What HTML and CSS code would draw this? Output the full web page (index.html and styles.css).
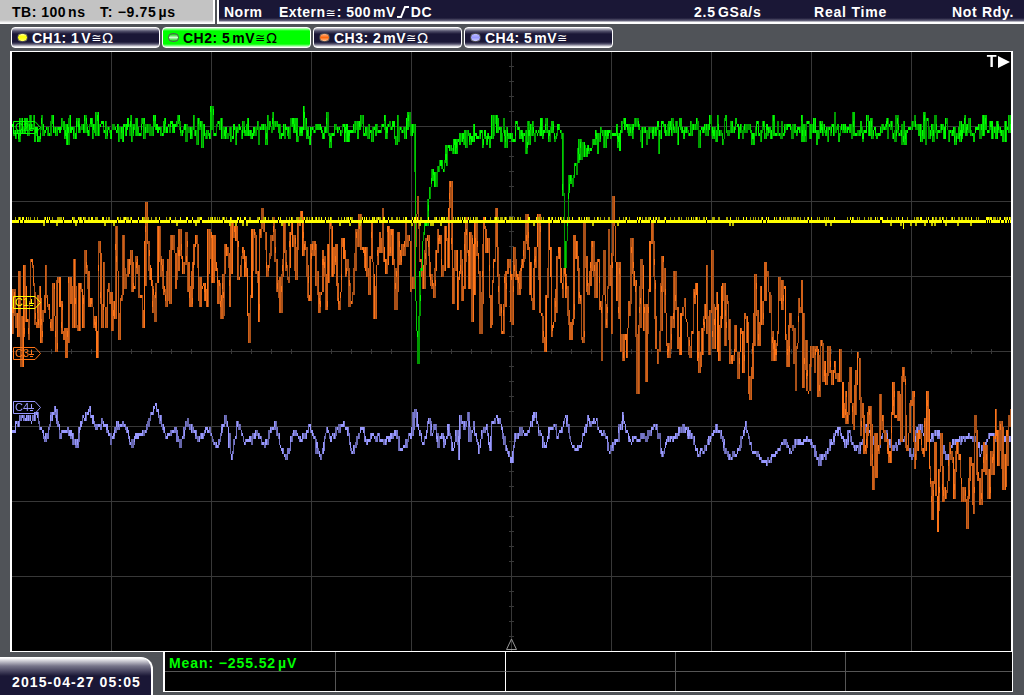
FILE: index.html
```html
<!DOCTYPE html>
<html lang="en">

<head>
    <meta charset="UTF-8">
    <meta name="viewport" content="width=device-width, initial-scale=1.0">
    <title>Oscilloscope</title>
    <link rel="stylesheet" href="styles.css">
</head>

<body>
    <div class="screen">
        <div class="top-bar">
            <div class="timebase"><span class="tb">TB: 100<i></i>ns</span><span class="pos">T: &minus;9.75<i></i>µs</span></div>
            <div class="status">
                <span class="mode">Norm</span>
                <span class="trigger">Extern<b class="sym">≅</b>: 500<i></i>mV<svg class="edge" width="13" height="12" viewBox="0 0 13 12"><path d="M0 11H4L8 1H12" fill="none" stroke="#fff" stroke-width="2"/></svg>DC</span>
                <span class="rate">2.5<i></i>GSa/s</span>
                <span class="acq">Real Time</span>
                <span class="ready">Not Rdy.</span>
            </div>
        </div>

        <div class="channels">
            <div class="channel ch1"><span class="led"></span><span class="ch-name">CH1:</span><span>1<i></i>V</span><span class="sym">≅</span><span class="sym ohm">Ω</span></div>
            <div class="channel ch2 active"><span class="led"></span><span class="ch-name">CH2:</span><span>5<i></i>mV</span><span class="sym">≅</span><span class="sym ohm">Ω</span></div>
            <div class="channel ch3"><span class="led"></span><span class="ch-name">CH3:</span><span>2<i></i>mV</span><span class="sym">≅</span><span class="sym ohm">Ω</span></div>
            <div class="channel ch4"><span class="led"></span><span class="ch-name">CH4:</span><span>5<i></i>mV</span><span class="sym">≅</span></div>
        </div>

        <div class="plot">
            <canvas id="scope" width="999" height="599"></canvas>
            <div class="marker m1"><svg width="28" height="13" viewBox="0 0 28 13"><path d="M.5.5H22L27.5 6.5L22 12.5H.5Z"/><path d="M18.5 3V7M16 7.5H21M17 9.5H20"/></svg><span>C1</span></div>
            <div class="marker m2"><svg width="28" height="13" viewBox="0 0 28 13"><path d="M.5.5H22L27.5 6.5L22 12.5H.5Z"/><path d="M18.5 3V7M16 7.5H21M17 9.5H20"/></svg><span>C2</span></div>
            <div class="marker m3"><svg width="28" height="13" viewBox="0 0 28 13"><path d="M.5.5H22L27.5 6.5L22 12.5H.5Z"/><path d="M18.5 3V7M16 7.5H21M17 9.5H20"/></svg><span>C3</span></div>
            <div class="marker m4"><svg width="28" height="13" viewBox="0 0 28 13"><path d="M.5.5H22L27.5 6.5L22 12.5H.5Z"/><path d="M18.5 3V7M16 7.5H21M17 9.5H20"/></svg><span>C4</span></div>
            <div class="trig-level"><span>T</span><svg width="12" height="12" viewBox="0 0 12 12"><path d="M0 0L12 6L0 12Z" fill="#fff"/></svg></div>
            <svg class="trig-pos" width="11" height="12" viewBox="0 0 11 12"><path d="M5.5 1L10.5 11.5H.5Z" fill="none" stroke="#999"/></svg>
        </div>

        <div class="bottom">
            <div class="clock">2015-04-27 05:05</div>
            <div class="measure">
                <div class="cell value">Mean: &minus;255.52<i></i>µV</div>
                <div class="cell split"></div>
                <div class="cell"></div>
                <div class="cell"></div>
                <div class="cell"></div>
                <div class="cell"></div>
                <div class="cell split"></div>
                <div class="cell"></div>
                <div class="cell"></div>
                <div class="cell"></div>
            </div>
        </div>
    </div>

    <script src="script.js"></script>
</body>

</html>
```
FILE: styles.css
```css
* {
    box-sizing: border-box;
}

body {
    margin: 0;
    background-color: #505358;
    font-family: "Liberation Sans", Arial, sans-serif;
    font-size: 14px;
    font-weight: bold;
    color: #fff;
    letter-spacing: 0.5px;
}

/* thin space between a number and its unit */
i {
    display: inline-block;
    width: 2px;
}

.screen {
    width: 1024px;
    height: 695px;
    overflow: hidden;
}

.sym {
    font-family: "DejaVu Sans", sans-serif;
    font-weight: normal;
    font-size: 12px;
    letter-spacing: 0;
    line-height: 12px;
}

.ohm {
    margin-left: 1px;
    font-size: 14px;
}

.top-bar {
    display: flex;
    gap: 2px;
    height: 24px;
    line-height: 25px;
    white-space: nowrap;
}

.timebase {
    display: flex;
    width: 215px;
    padding-left: 12px;
    color: #000;
    background: linear-gradient(#c3c3c3 20px, #fff 23px);
    border-right: 2px solid #fff;
}

.tb {
    width: 88px;
}

.pos {
    letter-spacing: 0.7px;
}

.status {
    display: flex;
    flex: 1;
    padding-left: 5px;
    background: linear-gradient(#1a1736 18px, #6a6880 21px, #fff 22px);
    border-left: 2px solid #fff;
}

.mode {
    width: 55px;
}

.trigger {
    width: 415px;
}

.trigger .sym {
    margin-right: 1px;
}

.rate {
    width: 120px;
    letter-spacing: 0.8px;
}

.acq {
    width: 138px;
    letter-spacing: 0.8px;
}

.ready {
    letter-spacing: 0.7px;
}

.edge {
    margin: 0 1px -1px 1px;
}

.channels {
    display: flex;
    gap: 2px;
    height: 27px;
    padding: 3px 0 3px 11px;
}

.channel {
    display: flex;
    align-items: center;
    width: 149px;
    height: 21px;
    padding: 1px 0 0 5px;
    border: 1px solid #fff;
    border-radius: 4px;
    background: linear-gradient(#d8d8e0, #55536d 3px, #1a1736 6px, #1a1736 14px, #55536d 16px, #fff 19px);
}

.channel.active {
    color: #000;
    background: linear-gradient(#d0ffd0, #0f0 3px, #0f0 16px, #e0ffe0 19px);
}

.led {
    width: 11px;
    height: 9px;
    margin: 0 4px 1px 0;
    border: 1px solid #555;
    border-radius: 5px;
}

.ch-name {
    width: 39px;
}

.ch1 .led {
    background: linear-gradient(#ff9, #ff0 40%, #ff6);
}

.ch2 .led {
    background: linear-gradient(#0c0, #cfc 50%, #0c0);
}

.ch3 .led {
    background: linear-gradient(#ffb080, #ff6a10 50%, #ffc090);
}

.ch4 .led {
    background: linear-gradient(#bbf, #99f 50%, #ccf);
}

.plot {
    position: relative;
    width: 1003px;
    height: 601px;
    margin-left: 10px;
    border: solid #fff;
    border-width: 1px 2px;
    background-color: #000;
}

.plot canvas {
    display: block;
}

.marker {
    position: absolute;
    left: 1px;
    height: 13px;
    font-weight: normal;
    font-size: 11px;
    line-height: 13px;
    letter-spacing: 0;
}

.marker svg {
    display: block;
    fill: none;
    stroke: currentColor;
}

.marker span {
    position: absolute;
    left: 2px;
    top: 0;
}

.m1 {
    top: 244px;
    color: #ff0;
}

.m2 {
    top: 69px;
    color: #0f0;
}

.m3 {
    top: 295px;
    color: #ff7518;
}

.m4 {
    top: 349px;
    color: #9999ff;
}

.trig-level {
    position: absolute;
    top: 3px;
    right: 1px;
    display: flex;
    align-items: center;
    gap: 1px;
    font-size: 16px;
    line-height: 13px;
}

.trig-pos {
    position: absolute;
    left: 494px;
    bottom: 1px;
}

.bottom {
    display: flex;
    gap: 10px;
    height: 43px;
}

.clock {
    width: 153px;
    height: 38px;
    margin-top: 5px;
    padding-left: 12px;
    line-height: 48px;
    letter-spacing: 1.1px;
    white-space: nowrap;
    border-top: 1px solid #fff;
    border-right: 2px solid #fff;
    border-radius: 0 12px 0 0;
    background: linear-gradient(#fff, #77758a 8px, #1a1736 18px);
}

.measure {
    display: grid;
    grid-template-columns: 171px 170px 170px 170px 1fr;
    grid-template-rows: 20px 19px;
    width: 850px;
    height: 40px;
    border: solid #fff;
    border-width: 0 1px 1px 2px;
    background-color: #000;
}

.cell {
    border-right: 1px solid #555;
    border-bottom: 1px solid #555;
    white-space: nowrap;
}

.cell.split {
    border-right-color: #fff;
}

.cell:nth-child(5n) {
    border-right: none;
}

.cell:nth-child(n+6) {
    border-bottom: none;
}

.value {
    padding-left: 4px;
    line-height: 22px;
    letter-spacing: 0.9px;
    color: #0f0;
}
```
FILE: script.js
```javascript
const canvas = document.getElementById('scope');
const ctx = canvas.getContext('2d');

// screen coordinates, the plot area starts at 12,52
ctx.translate(-12, -52);

let seed = 20150427;
function rnd() {
    seed = (seed * 1664525 + 1013904223) % 4294967296;
    return seed / 4294967296;
}

function grid() {
    ctx.fillStyle = '#383838';
    for (let x = 111; x < 1011; x += 100) ctx.fillRect(x, 52, 1, 599);
    for (let y = 126; y < 651; y += 75) ctx.fillRect(12, y, 999, 1);
    for (let x = 31; x < 1011; x += 20) ctx.fillRect(x, 349, 1, 5);
    for (let y = 66; y < 651; y += 15) ctx.fillRect(509, y, 5, 1);
}

// "x,y x,y ..." -> one value for every column
function samples(str) {
    const pts = str.trim().split(/\s+/).map(p => p.split(',').map(Number));
    const out = [];
    let i = 0;
    for (let x = 12; x < 1011; x++) {
        while (i < pts.length - 2 && pts[i + 1][0] < x) i++;
        const a = pts[i], b = pts[i + 1];
        const t = Math.max(0, Math.min(1, (x - a[0]) / (b[0] - a[0])));
        out.push(a[1] + (b[1] - a[1]) * t);
    }
    return out;
}

// every column holds the min/max of its neighbours, drawn in steps of 3px like the 8 bit samples
function trace(values, noise, hold, colors) {
    const ys = values.map((v, n) => v + noise(n + 12, v));
    ys.forEach((y, n) => {
        const near = [y];
        if (n > 0) near.push(ys[n - 1]);
        if (n > 1 && rnd() < hold) near.push(ys[n - 2]);
        if (n < ys.length - 1 && rnd() < hold) near.push(ys[n + 1]);
        const top = Math.round((Math.min(...near) - 1) / 3) * 3 + 1;
        const bottom = Math.round((Math.max(...near) + 1) / 3) * 3 + 1;
        const h = Math.max(3, bottom - top);
        let c = h <= 4 ? 0 : (rnd() < 0.5 ? 1 : 2);
        if (h > 6 && rnd() < 0.1) c = 0;
        ctx.fillStyle = colors[c];
        ctx.fillRect(n + 12, top, 1, h);
        if (h > 4 && rnd() < 0.35) {
            ctx.fillStyle = colors[0];
            const spot = Math.min(h, 6);
            ctx.fillRect(n + 12, top + Math.floor(rnd() * (h - spot) / 3) * 3, 1, spot);
        }
    });
}

const ch3 = `12,330 14,280 17,337 18,271 21,358 23,278 28,337 30,250 33,283 36,322 39,292 41,334 45,277 50,333 53,277
55,349 58,265 61,310 65,337 67,355 69,274 73,315 74,265 77,333 80,272 82,342 84,265 88,280 92,320 97,340 98,252
102,310 103,259 105,330 108,280 112,313 115,305 116,243 119,337 123,235 125,290 130,250 133,295 137,250 141,307
143,312 146,211 150,291 154,309 158,235 162,290 165,306 168,250 169,295 171,226 176,285 178,230 183,270 186,238
190,315 193,250 195,235 198,285 202,297 206,290 208,222 212,270 213,240 217,289 222,309 224,250 227,244 229,309
231,235 235,242 240,280 243,250 246,283 249,330 252,222 258,303 259,235 264,217 266,265 270,240 274,223 277,283
280,294 283,232 287,281 291,229 296,283 298,223 302,225 305,260 309,288 312,236 315,260 319,306 323,250 326,312
329,222 332,280 335,245 339,297 342,227 346,270 349,297 352,302 355,247 358,220 364,250 368,300 371,232 374,310
377,250 382,223 385,280 387,245 391,238 395,300 398,235 401,270 404,235 408,232 411,297 415,225 417,188 420,275
423,283 426,225 431,291 434,291 437,218 442,276 445,216 448,250 450,196 452,306 455,250 457,308 461,250 462,303
466,208 468,270 470,228 472,315 475,226 480,328 483,211 486,250 488,247 490,343 495,223 498,309 503,330 506,259
510,285 512,336 514,232 518,293 522,260 526,222 532,312 535,250 538,226 540,303 544,345 548,222 551,322 555,309
558,250 562,309 563,260 567,312 571,337 574,229 578,303 582,327 583,232 588,306 592,244 595,290 597,250 601,345
603,250 606,333 608,222 611,315 613,208 616,309 618,262 620,342 624,348 627,343 631,250 635,276 637,376 641,244
645,366 648,280 651,235 654,290 657,373 660,330 662,262 665,318 668,361 671,328 674,277 679,360 682,298 686,333
689,361 695,283 697,320 699,375 703,330 706,280 708,360 711,265 713,333 716,283 719,373 722,280 725,330 726,283
729,355 732,370 735,318 737,366 741,330 742,375 744,304 747,350 749,383 752,383 755,283 758,345 760,271 762,330
765,276 768,285 771,345 776,360 779,280 784,302 787,348 790,310 794,355 795,385 798,307 801,289 803,370 806,350
808,399 811,350 814,380 815,332 818,408 820,328 823,365 826,393 828,343 831,390 834,353 838,385 840,358 842,411
845,383 846,429 849,370 850,367 852,437 855,380 857,346 860,420 861,400 864,463 866,430 869,412 872,480 875,430
876,468 879,410 883,420 887,455 889,460 893,394 896,430 898,392 900,425 901,383 903,352 905,425 907,440 912,388
914,465 917,430 923,462 926,388 928,430 932,516 935,455 937,522 940,440 943,497 946,497 950,440 953,492 956,440
959,455 961,487 966,512 969,460 973,498 974,409 978,480 980,505 984,440 988,492 990,450 993,470 995,421 998,455
1000,418 1003,490 1007,440 1010,421`;

const ch4 = `12,430 17,422 22,417 28,420 35,412 37,416 42,432 46,438 50,420 55,407 60,434 68,432 72,436 76,445 82,417
89,410 94,426 100,426 102,420 110,440 117,425 122,419 130,445 136,435 145,432 150,415 154,403 160,420 166,437
173,428 179,444 187,420 193,430 198,440 206,425 216,444 220,435 225,415 231,458 237,423 243,440 250,440 256,430
263,446 270,432 274,425 280,445 287,455 294,428 300,442 309,424 315,445 320,458 326,430 330,437 335,431 343,422
346,426 352,455 360,426 366,443 372,437 378,435 384,442 390,436 396,432 399,446 403,447 408,436 411,437 413,412
416,414 418,430 423,447 428,416 431,433 434,421 438,445 441,430 443,446 448,425 452,448 456,435 458,455 460,418
464,428 467,414 469,441 473,424 478,452 481,432 486,425 489,449 491,425 496,413 500,423 503,440 511,457 515,433
520,430 525,434 530,425 534,415 538,430 544,448 549,431 553,424 557,436 561,428 565,417 570,440 577,452 582,435
587,418 592,422 595,421 600,430 603,428 608,450 616,440 622,416 628,437 635,438 640,435 645,440 650,430 654,422
662,452 668,435 673,440 677,430 683,428 690,435 698,453 702,450 708,438 715,426 720,434 725,450 730,457 738,448
745,425 750,445 757,453 764,464 770,455 777,452 783,440 789,452 797,440 808,440 814,450 818,463 822,452 825,458
828,445 833,436 838,430 842,440 846,446 849,430 854,447 859,450 866,425 872,440 878,446 884,430 890,446 896,446
901,435 905,442 911,458 917,428 926,430 930,438 937,432 942,445 946,457 952,441 960,440 967,436 975,438 980,455
988,433 995,435 1003,438 1010,438`;

const ch2 = `12,128 413,128 414,168 415,300 416,330 417,362 418,362 419,315 420,270 421,268 422,240 424,224 426,224 427,207
429,188 431,172 433,177 435,180 438,166 440,160 442,163 447,150 452,142 463,139 480,134 497,130 517,132 540,129
560,130 562,138 563,193 564,255 565,265 566,240 567,220 568,190 570,177 573,176 575,168 578,153 588,146 597,136
620,134 632,129 1011,129`;

// occasional taller spikes of channel 2
const spikes = {
    33: 115, 39: 141, 69: 115, 96: 112, 130: 115, 153: 115, 196: 143, 202: 147, 211: 106, 235: 144, 258: 143,
    272: 112, 303: 106, 309: 143, 326: 112, 329: 147, 361: 115, 396: 144, 397: 115, 408: 112, 489: 147, 526: 151,
    546: 118, 597: 153, 623: 118, 641: 147, 658: 151, 677: 144, 699: 147, 709: 115, 717: 115, 722: 144, 760: 141,
    773: 115, 801: 115, 816: 144, 834: 112, 852: 112, 866: 115, 902: 144, 914: 115, 921: 141, 924: 112, 955: 144,
    982: 115, 1005: 141, 1009: 115
};

grid();
trace(samples(ch4), () => (rnd() - 0.5) * 8, 0.3, ['#9999ff', '#7777cc', '#6666aa']);
trace(samples(ch3), () => (rnd() - 0.5) * 34, 0.5, ['#ff7518', '#d06018', '#a85018']);
trace(samples(ch2), (x, v) => {
    if (spikes[x]) return spikes[x] - v;
    if (v > 185) return 0;
    return (rnd() + rnd() + rnd() - 1.5) * 12;
}, 0.35, ['#00ff00', '#00cc00', '#009900']);

// channel 1 is flat, only the last bit toggles
ctx.fillStyle = '#ffff00';
ctx.fillRect(12, 220, 999, 3);
for (let x = 12; x < 1011; x++) {
    const r = rnd();
    if (r < 0.4) {
        ctx.fillStyle = r < 0.14 ? '#ffff00' : '#aaaa00';
        ctx.fillRect(x, 217, 1, 3);
        if (r < 0.05) {
            ctx.fillStyle = '#000';
            ctx.fillRect(x, 220, 1, 3);
        }
    } else if (r > 0.96) {
        ctx.fillStyle = '#bbbb00';
        ctx.fillRect(x, 223, 2, 3);
    }
}
ctx.fillStyle = '#ffff00';
ctx.fillRect(903, 223, 1, 6);
```
